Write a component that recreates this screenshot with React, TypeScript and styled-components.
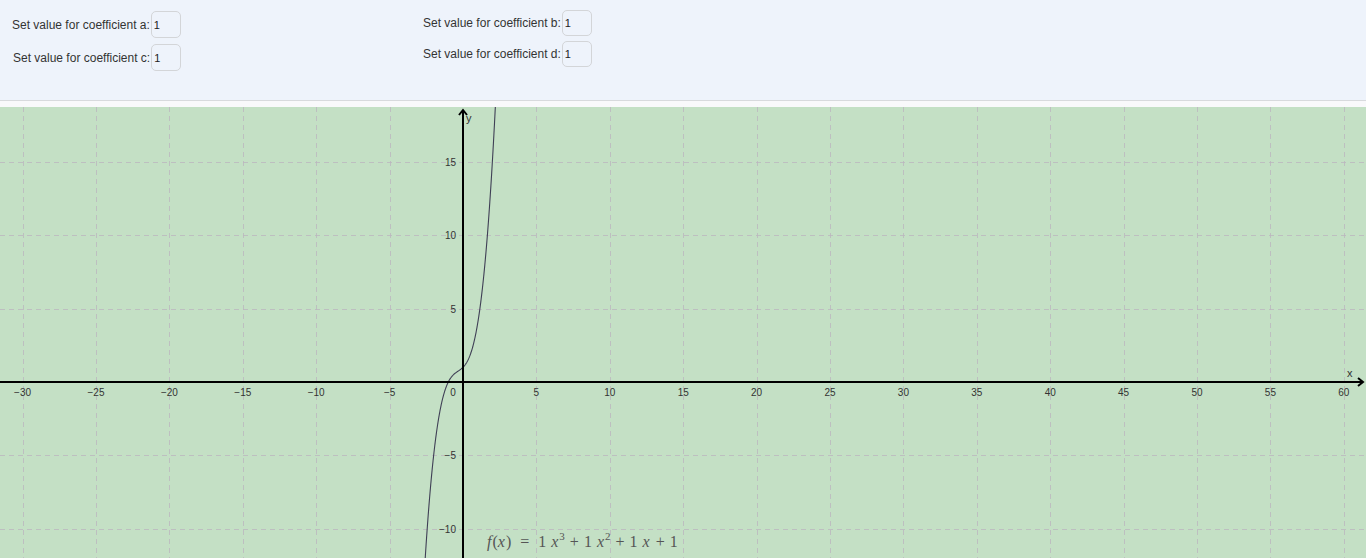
import styled, { createGlobalStyle } from 'styled-components';

const GlobalStyle = createGlobalStyle`
  html, body {
    margin: 0;
    padding: 0;
    background: #ffffff;
    font-family: 'Liberation Sans', Arial, sans-serif;
  }
`;

const W = 1366;
const H = 451;
const OX = 463;
const OY = 275;
const S = 14.68;

const f = (x: number) => x * x * x + x * x + x + 1;

function curvePath() {
  const pts: string[] = [];
  for (let x = -3; x <= 2.5; x += 0.01) {
    const px = OX + x * S;
    const py = OY - f(x) * S;
    if (py < -50 || py > H + 50) continue;
    pts.push(`${pts.length ? 'L' : 'M'}${px.toFixed(2)},${py.toFixed(2)}`);
  }
  return pts.join(' ');
}

const xTicks: number[] = [];
for (let k = -30; k <= 60; k += 5) xTicks.push(k);
const yTicks: number[] = [];
for (let k = -10; k <= 15; k += 5) yTicks.push(k);

const fmt = (n: number) => (n < 0 ? `\u2212${-n}` : `${n}`);

function App() {
  return (
    <Styled.Root>
      <GlobalStyle />
      <Styled.Panel>
        <Styled.Column $top={11} $gap={6} $width={411}>
          <Field label="Set value for coefficient a:" value="1" />
          <Field label="Set value for coefficient c:" value="1" indent={1} />
        </Styled.Column>
        <Styled.Column $top={10} $gap={5}>
          <Field label="Set value for coefficient b:" value="1" small />
          <Field label="Set value for coefficient d:" value="1" small />
        </Styled.Column>
      </Styled.Panel>
      <Styled.Strip />
      <Styled.Graph>
        <svg width={W} height={H} viewBox={`0 0 ${W} ${H}`}>
          <g stroke="#bcb6be" strokeOpacity={0.8} strokeWidth={1} strokeDasharray="5 4" fill="none">
            {Array.from({ length: 22 }, (_, i) => (i - 7) * 5)
              .filter((k) => k !== 0)
              .map((k) => {
                const x = Math.round(OX + k * S) + 0.5;
                return <line key={`v${k}`} x1={x} y1={0} x2={x} y2={H} />;
              })}
            {[-15, -10, -5, 5, 10, 15, 20].map((k) => {
              const y = Math.round(OY - k * S) + 0.5;
              return <line key={`h${k}`} x1={0} y1={y} x2={W} y2={y} />;
            })}
          </g>

          <path d={curvePath()} stroke="#3f3f55" strokeWidth={1.1} fill="none" />

          <g stroke="#000" strokeWidth={2} fill="none">
            <line x1={0} y1={OY} x2={1363} y2={OY} />
            <polyline points={`1358,${OY - 4} 1363,${OY} 1358,${OY + 4}`} />
            <line x1={OX} y1={H} x2={OX} y2={3} />
            <polyline points={`${OX - 4},8 ${OX},3 ${OX + 4},8`} />
          </g>

          <g fontFamily="'Liberation Sans', Arial, sans-serif" fontSize={10} fill="#333">
            {xTicks.map((k) => (
              <text
                key={`tx${k}`}
                x={k === 0 ? 453 : OX + k * S}
                y={OY + 14}
                textAnchor="middle"
              >
                {fmt(k)}
              </text>
            ))}
            {yTicks
              .filter((k) => k !== 0)
              .map((k) => (
                <text key={`ty${k}`} x={456} y={OY - k * S + 4} textAnchor="end">
                  {fmt(k)}
                </text>
              ))}
            <text x={1347} y={OY - 5} fontSize={11}>
              x
            </text>
            <text x={466} y={15} fontSize={11}>
              y
            </text>
          </g>
        </svg>
        <Styled.Formula>
          <i>f</i>(<i>x</i>)<Styled.Rel>=</Styled.Rel>1<Styled.Thin />
          <i>x</i>
          <sup>3</sup>
          <Styled.Op>+</Styled.Op>1<Styled.Thin />
          <i>x</i>
          <sup>2</sup>
          <Styled.Op>+</Styled.Op>1<Styled.Thin />
          <i>x</i>
          <Styled.Op>+</Styled.Op>1
        </Styled.Formula>
      </Styled.Graph>
    </Styled.Root>
  );
}

function Field({
  label,
  value,
  indent = 0,
  small = false,
}: {
  label: string;
  value: string;
  indent?: number;
  small?: boolean;
}) {
  return (
    <Styled.Field $indent={indent}>
      <Styled.Label>{label}</Styled.Label>
      <Styled.Input $small={small} defaultValue={value} />
    </Styled.Field>
  );
}

export default App;

const Styled = {
  Root: styled.div`
    width: 1366px;
    height: 558px;
    overflow: hidden;
  `,
  Panel: styled.div`
    display: flex;
    height: 101px;
    box-sizing: border-box;
    padding-left: 12px;
    background: #eef3fb;
    border-bottom: 1px solid #d8dadd;
  `,
  Column: styled.div<{ $top: number; $gap: number; $width?: number }>`
    display: flex;
    flex-direction: column;
    gap: ${(p) => p.$gap}px;
    padding-top: ${(p) => p.$top}px;
    width: ${(p) => (p.$width ? `${p.$width}px` : 'auto')};
  `,
  Field: styled.div<{ $indent: number }>`
    display: flex;
    align-items: center;
    gap: 1px;
    padding-left: ${(p) => p.$indent}px;
  `,
  Label: styled.span`
    font-size: 12px;
    color: #333;
    white-space: nowrap;
  `,
  Input: styled.input<{ $small: boolean }>`
    box-sizing: border-box;
    width: 30px;
    height: ${(p) => (p.$small ? 26 : 27)}px;
    padding: 0 2px;
    border: 1px solid #d3d5d8;
    border-radius: 5px;
    background: transparent;
    font-family: 'Liberation Sans', Arial, sans-serif;
    font-size: 11px;
    color: #222;
    outline: none;
  `,
  Strip: styled.div`
    height: 6px;
    background: #f9f9fb;
  `,
  Graph: styled.div`
    position: relative;
    height: 451px;
    background: #c4e0c5;
    overflow: hidden;

    svg {
      display: block;
    }
  `,
  Formula: styled.div`
    position: absolute;
    left: 487px;
    top: 426px;
    display: flex;
    align-items: baseline;
    font-family: 'Liberation Serif', 'DejaVu Serif', serif;
    font-size: 16px;
    color: #555;
    white-space: nowrap;

    i {
      padding-right: 1px;
    }

    sup {
      font-size: 11px;
      position: relative;
      top: -7px;
    }
  `,
  Rel: styled.span`
    padding: 0 9px;
  `,
  Op: styled.span`
    padding: 0 5px;
  `,
  Thin: styled.span`
    width: 5px;
  `,
};
